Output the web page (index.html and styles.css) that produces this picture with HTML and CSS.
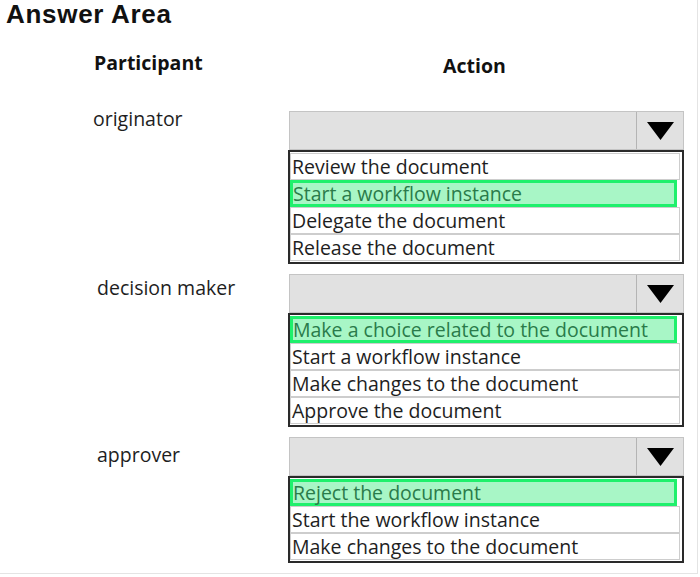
FILE: index.html
```html
<!DOCTYPE html>
<html lang="en">
<head>
    <meta charset="UTF-8">
    <meta name="viewport" content="width=device-width, initial-scale=1.0">
    <title>Answer Area</title>
    <link rel="stylesheet" href="styles.css">
</head>
<body>
    <div class="answer-area">
        <h1 class="answer-title">Answer Area</h1>

        <div class="answer-grid">
            <div class="col-head col-participant">Participant</div>
            <div class="col-head col-action">Action</div>

            <div class="participant participant-originator">originator</div>
            <div class="dropdown">
                <div class="select">
                    <span class="select-value"></span>
                    <span class="select-arrow">
                        <svg width="27" height="18" viewBox="0 0 27 18"><polygon points="0,0 27,0 13.5,18" fill="#000"/></svg>
                    </span>
                </div>
                <ul class="options">
                    <li class="option">Review the document</li>
                    <li class="option selected">Start a workflow instance</li>
                    <li class="option">Delegate the document</li>
                    <li class="option">Release the document</li>
                </ul>
            </div>

            <div class="participant participant-decision">decision maker</div>
            <div class="dropdown">
                <div class="select">
                    <span class="select-value"></span>
                    <span class="select-arrow">
                        <svg width="27" height="18" viewBox="0 0 27 18"><polygon points="0,0 27,0 13.5,18" fill="#000"/></svg>
                    </span>
                </div>
                <ul class="options">
                    <li class="option selected">Make a choice related to the document</li>
                    <li class="option">Start a workflow instance</li>
                    <li class="option">Make changes to the document</li>
                    <li class="option">Approve the document</li>
                </ul>
            </div>

            <div class="participant participant-approver">approver</div>
            <div class="dropdown">
                <div class="select">
                    <span class="select-value"></span>
                    <span class="select-arrow">
                        <svg width="27" height="18" viewBox="0 0 27 18"><polygon points="0,0 27,0 13.5,18" fill="#000"/></svg>
                    </span>
                </div>
                <ul class="options">
                    <li class="option selected">Reject the document</li>
                    <li class="option">Start the workflow instance</li>
                    <li class="option">Make changes to the document</li>
                </ul>
            </div>
        </div>
    </div>
</body>
</html>
```

FILE: styles.css
```css
:root {
    --text: #1e1e1e;
    --select-bg: #e1e1e1;
    --select-border: #c4c4c4;
    --row-border: #cdcdcd;
    --pick-border: #1ff06c;
    --pick-bg: #a8f6c6;
    --pick-text: #2a7b4a;
}

* {
    margin: 0;
    padding: 0;
    box-sizing: border-box;
}

body {
    background: #fff;
    font-family: 'Open Sans', 'Noto Sans', sans-serif;
    color: var(--text);
}

.answer-area {
    width: 698px;
    height: 574px;
    border-right: 1px solid #e4e4e4;
    border-bottom: 1px solid #e4e4e4;
}

.answer-title {
    font-family: 'Liberation Sans', Arial, sans-serif;
    font-size: 26px;
    font-weight: bold;
    letter-spacing: 0.7px;
    line-height: 28px;
    padding-left: 6px;
    color: #111;
}

.answer-grid {
    display: grid;
    grid-template-columns: 288px 396px;
    row-gap: 10px;
    margin-top: 23px;
}

.col-head {
    height: 50px;
    font-size: 19.5px;
    font-weight: 700;
    line-height: 24px;
    color: #111;
}

.col-participant {
    padding-left: 94px;
}

.col-action {
    padding-left: 155px;
    padding-top: 3px;
}

.participant {
    font-size: 19.5px;
    line-height: 24px;
    padding-left: 93px;
}

.participant-originator {
    margin-top: -4px;
}

.participant-decision {
    padding-left: 97px;
    padding-top: 2px;
}

.participant-approver {
    padding-left: 97px;
    padding-top: 6px;
}

.dropdown {
    display: flex;
    flex-direction: column;
}

.select {
    display: flex;
    height: 39px;
    margin-left: 1px;
    border: 1px solid var(--select-border);
    background: var(--select-bg);
}

.select-value {
    flex: 1;
}

.select-arrow {
    width: 47px;
    display: flex;
    align-items: center;
    justify-content: center;
    border-left: 1px solid #b4b4b4;
}

.options {
    list-style: none;
    border: 2px solid #2a2a2a;
    padding: 1px 2px 1px 0;
}

.option {
    height: 27px;
    line-height: 25px;
    padding-left: 1px;
    border: 1px solid var(--row-border);
    font-size: 19.5px;
    white-space: nowrap;
}

.option.selected {
    border: 3px solid var(--pick-border);
    background: var(--pick-bg);
    color: var(--pick-text);
    line-height: 21px;
    padding-left: 0;
    margin-right: 3px;
}
```
